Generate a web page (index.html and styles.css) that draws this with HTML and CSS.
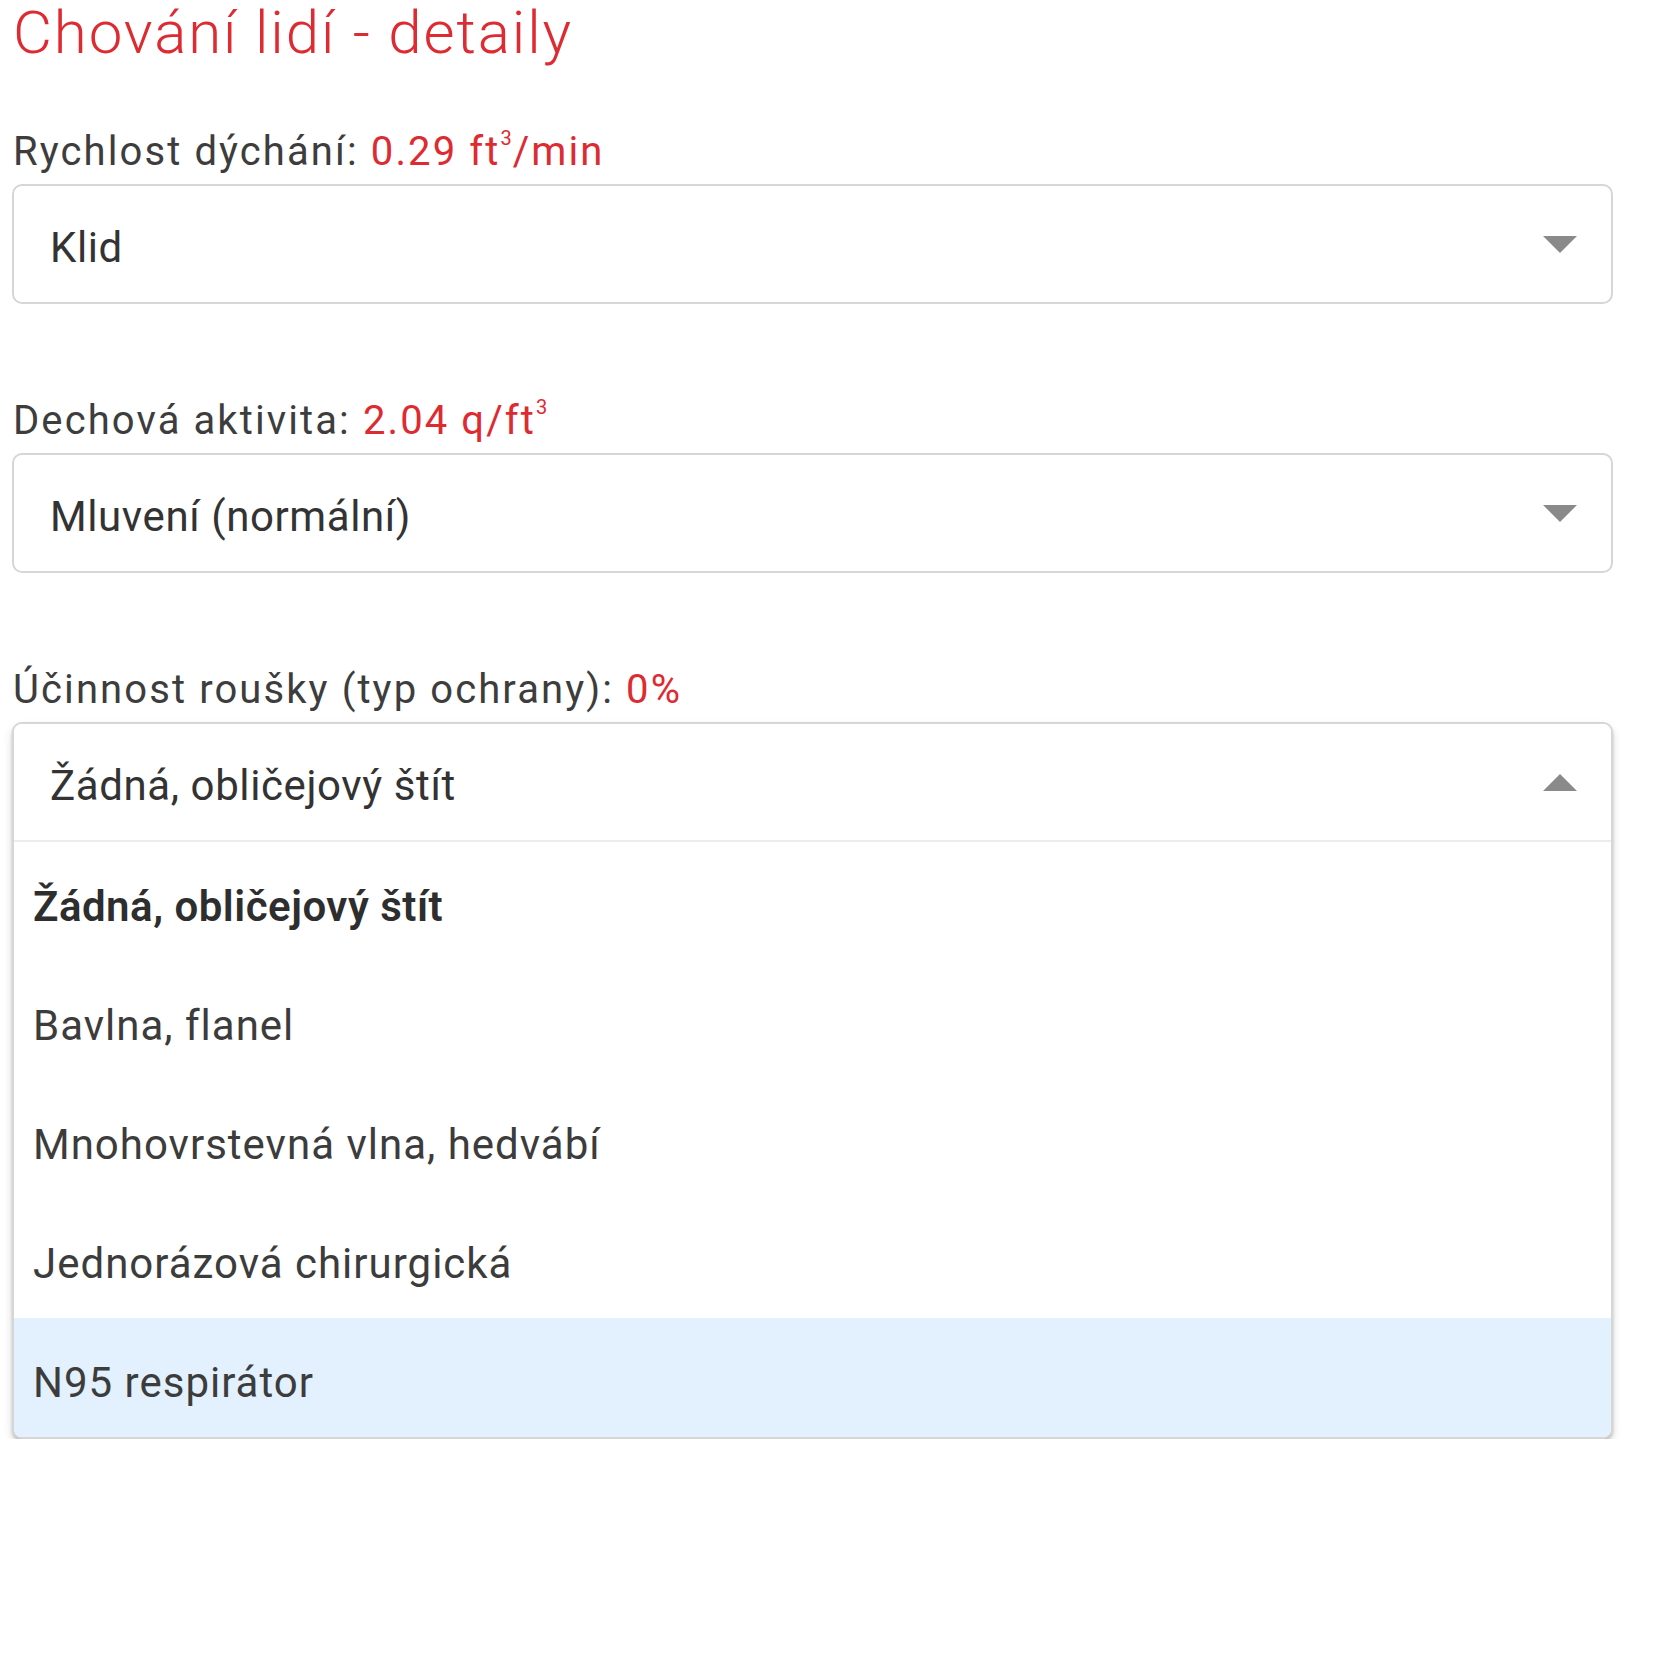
FILE: index.html
```html
<!DOCTYPE html>
<html lang="cs">
<head>
<meta charset="utf-8">
<title>Chování lidí - detaily</title>
<link rel="stylesheet" href="styles.css">
</head>
<body>
<main class="page">
  <h1 class="title">Chování lidí - detaily</h1>

  <section class="field">
    <div class="label">Rychlost dýchání: <span class="value">0.29 ft<sup>3</sup>/min</span></div>
    <div class="select">
      <span class="select-text">Klid</span>
      <svg class="caret" viewBox="0 0 34 17" width="34" height="17"><path d="M0 0 L34 0 L17 17 Z" fill="#8a8a8a"/></svg>
    </div>
  </section>

  <section class="field">
    <div class="label">Dechová aktivita: <span class="value">2.04 q/ft<sup>3</sup></span></div>
    <div class="select">
      <span class="select-text">Mluvení (normální)</span>
      <svg class="caret" viewBox="0 0 34 17" width="34" height="17"><path d="M0 0 L34 0 L17 17 Z" fill="#8a8a8a"/></svg>
    </div>
  </section>

  <section class="field">
    <div class="label">Účinnost roušky (typ ochrany): <span class="value">0%</span></div>
    <div class="dropdown">
      <div class="select select-head">
        <span class="select-text">Žádná, obličejový štít</span>
        <svg class="caret" viewBox="0 0 34 17" width="34" height="17"><path d="M0 17 L34 17 L17 0 Z" fill="#8a8a8a"/></svg>
      </div>
      <ul class="menu">
        <li class="option selected">Žádná, obličejový štít</li>
        <li class="option">Bavlna, flanel</li>
        <li class="option">Mnohovrstevná vlna, hedvábí</li>
        <li class="option">Jednorázová chirurgická</li>
        <li class="option hover">N95 respirátor</li>
      </ul>
    </div>
  </section>
</main>
</body>
</html>
```

FILE: styles.css
```css
html, body {
  margin: 0;
  padding: 0;
  background: #ffffff;
}

body {
  font-family: Roboto, "Noto Sans", "Liberation Sans", sans-serif;
  color: #3a3a3a;
}

.page {
  padding-left: 12px;
  width: 1601px;
}

.title {
  margin: 0;
  font-size: 60px;
  font-weight: 300;
  line-height: 66px;
  color: #de2a31;
  letter-spacing: 1.9px;
  padding-left: 1px;
}

.field {
  margin-top: 93px;
}

.field:first-of-type {
  margin-top: 62px;
}

.label {
  font-size: 40px;
  line-height: 48px;
  color: #3d3d3d;
  letter-spacing: 2.1px;
  margin-bottom: 8px;
  padding-left: 1px;
}

.value {
  color: #de2a31;
}

.value sup {
  font-size: 20px;
  line-height: 0;
  vertical-align: 20px;
  letter-spacing: 0;
  margin-right: 1px;
}

.select {
  box-sizing: border-box;
  height: 120px;
  border: 2px solid #d6d6d6;
  border-radius: 10px;
  display: flex;
  align-items: center;
  justify-content: space-between;
  padding: 8px 34px 0 36px;
  background: #ffffff;
}

.select-text {
  font-size: 42px;
  line-height: 50px;
  color: #333333;
  letter-spacing: 0.6px;
}

.caret {
  display: block;
  margin-top: -8px;
}

.dropdown {
  border: 2px solid #d6d6d6;
  border-radius: 10px;
  background: #ffffff;
  box-shadow: 0 5px 10px rgba(0, 0, 0, 0.14), 0 2px 3px rgba(0, 0, 0, 0.18);
  overflow: hidden;
}

.select-head {
  border: none;
  border-bottom: 2px solid #ececec;
  border-radius: 0;
  height: 118px;
}

.menu {
  list-style: none;
  margin: 0;
  padding: 0;
}

.option {
  box-sizing: border-box;
  height: 119px;
  display: flex;
  align-items: center;
  padding: 10px 20px 0 19px;
  font-size: 42px;
  line-height: 50px;
  color: #3c3c3c;
  letter-spacing: 1px;
}

.option.selected {
  font-weight: 600;
  color: #2e2e2e;
  letter-spacing: 0.5px;
}

.option.hover {
  background: #e3f0fd;
}
```
